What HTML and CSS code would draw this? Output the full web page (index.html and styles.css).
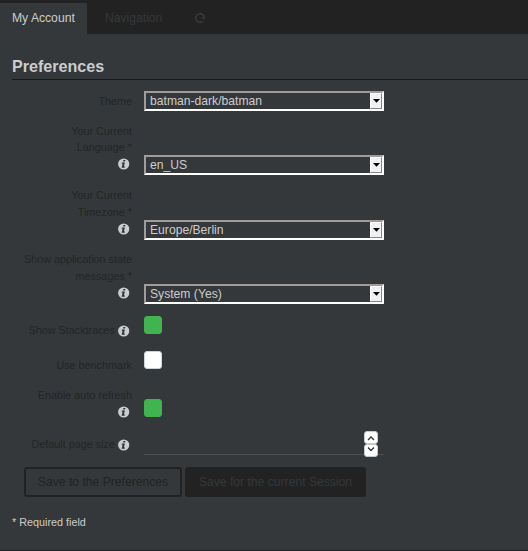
FILE: index.html
```html
<!DOCTYPE html>
<html lang="en">
<head>
<meta charset="utf-8">
<title>Preferences</title>
<link rel="stylesheet" href="styles.css">
</head>
<body>
<svg class="defs" width="0" height="0">
  <symbol id="info" viewBox="0 0 12 12">
    <circle cx="5.7" cy="6" r="5.6" fill="#ccc"/>
    <path d="M5.4 1.9h2l-.4 1.7H5zM3.9 4.5h3L5.9 8.4h1.1l-.3 1.3H3.6l1-4H3.6z" fill="#303538"/>
  </symbol>
  <symbol id="down" viewBox="0 0 12 16">
    <path d="M3 6h7L6.5 9.8z" fill="#000"/>
  </symbol>
</svg>
<nav class="tabs">
  <a class="tab active">My Account</a>
  <a class="tab nav">Navigation</a>
  <svg class="reload" viewBox="0 0 12 12"><path d="M8.7 9.3A4.3 4.3 0 1 1 10.2 5.2" fill="none" stroke="#343a3d" stroke-width="1.6"/><path d="M7.3 5h4.7L9.8 7.7z" fill="#343a3d"/></svg>
</nav>
<main>
  <h1>Preferences</h1>
  <form class="fields">
    <div class="row theme"><label>Theme</label><div class="select"><span>batman-dark/batman</span><i><svg><use href="#down"/></svg></i></div></div>
    <div class="row tall language"><label>Your Current<br>Language *<br><svg class="info"><use href="#info"/></svg></label><div class="select"><span>en_US</span><i><svg><use href="#down"/></svg></i></div></div>
    <div class="row tall timezone"><label>Your Current<br>Timezone *<br><svg class="info"><use href="#info"/></svg></label><div class="select"><span>Europe/Berlin</span><i><svg><use href="#down"/></svg></i></div></div>
    <div class="row tall state"><label>Show application state<br>messages *<br><svg class="info"><use href="#info"/></svg></label><div class="select"><span>System (Yes)</span><i><svg><use href="#down"/></svg></i></div></div>
    <div class="row check"><label>Show Stacktraces <svg class="info"><use href="#info"/></svg></label><div class="box on"></div></div>
    <div class="row check"><label>Use benchmark</label><div class="box"></div></div>
    <div class="row refresh"><label>Enable auto refresh<br><svg class="info"><use href="#info"/></svg></label><div class="box on"></div></div>
    <div class="row size"><label>Default page size <svg class="info"><use href="#info"/></svg></label>
      <div class="number"><div class="spin">
        <b><svg viewBox="0 0 14 13"><path d="M4 9 7 6l3 3" fill="none" stroke="#333" stroke-width="1.3"/></svg></b>
        <b><svg viewBox="0 0 14 13"><path d="M4 3.5 7 6.5l3-3" fill="none" stroke="#333" stroke-width="1.3"/></svg></b>
      </div></div></div>
  </form>
  <div class="buttons"><button class="outline">Save to the Preferences</button><button class="solid">Save for the current Session</button></div>
  <p class="note">* Required field</p>
</main>
</body>
</html>
```
FILE: styles.css
```css
* { box-sizing: border-box; }
body {
  margin: 0;
  height: 551px;
  overflow: hidden;
  background: #34383b;
  border-bottom: 1px solid #222;
  font-family: "Liberation Sans", Arial, sans-serif;
  font-size: 10.8px;
  color: #ccc;
}
.defs { display: block; }
.tabs {
  display: flex;
  align-items: flex-start;
  height: 34px;
  padding-top: 3px;
  background: #222;
  font-size: 12.15px;
}
.tab { height: 31px; line-height: 30px; }
.active { width: 87px; padding-left: 12px; background: #34383b; }
.nav { width: 107px; padding-left: 18px; color: #34383b; }
.reload { width: 12px; height: 12px; margin-top: 9px; }
main { padding-left: 12px; }
h1 {
  height: 46px;
  margin: 0;
  padding-top: 23px;
  border-bottom: 1px solid #032228;
  font-size: 16.1px;
  line-height: 19px;
}
.fields { padding-top: 11px; }
.row {
  display: grid;
  grid-template-columns: 120px 240px;
  column-gap: 12px;
  align-items: start;
}
label { text-align: right; line-height: 16.5px; color: #242424; white-space: nowrap; }
.info { width: 12px; height: 12px; margin-right: 2px; vertical-align: -2.5px; }
.theme { height: 32px; }
.theme label { padding-top: 2px; }
.tall { height: 64px; }
.tall .select { margin-top: 32px; }
.language { height: 65px; }
.language label { line-height: 16.3px; }
.timezone label, .state label { margin-top: -1px; }
.select {
  display: flex;
  justify-content: space-between;
  height: 20px;
  border: 2px solid;
  border-color: #a09c99 #fff #fff #a09c99;
  font-size: 12.15px;
  line-height: 16px;
}
.select span { padding-left: 4px; }
.select i {
  width: 12px;
  height: 16px;
  border: 1px solid;
  border-color: #fff #858585 #858585 #fff;
  background: #eff2f4;
}
.select svg { display: block; width: 12px; height: 16px; margin: -1px; }
.check { height: 35px; }
.check label { padding-top: 6px; }
.box { width: 18px; height: 18px; border: 1px solid #ccd4da; border-radius: 3px; background: #fff; }
.on { border-color: #40b450; background: #40b450; }
.refresh { height: 44px; }
.refresh label { padding-top: 1px; }
.refresh .box { margin-top: 13px; }
.size { height: 37px; }
.size label { padding-top: 6px; }
.number { height: 25px; border-bottom: 1px solid #505050; }
.spin { width: 14px; margin-left: 220px; padding-top: 1px; }
.spin b { display: block; height: 13px; border: 1px solid #c4cace; border-radius: 3px; background: #fff; }
.spin svg { display: block; width: 14px; height: 13px; margin: -1px; }
.buttons { display: flex; gap: 3px; padding-left: 12px; }
button {
  height: 30px;
  padding: 0;
  border: 2px solid #222;
  border-radius: 3px;
  font: 12.15px "Liberation Sans", Arial, sans-serif;
}
.outline { width: 158px; background: transparent; color: #222; }
.solid { width: 181px; background: #222; color: #34383b; }
.note { margin: 17px 0 0; line-height: 16px; }
```
